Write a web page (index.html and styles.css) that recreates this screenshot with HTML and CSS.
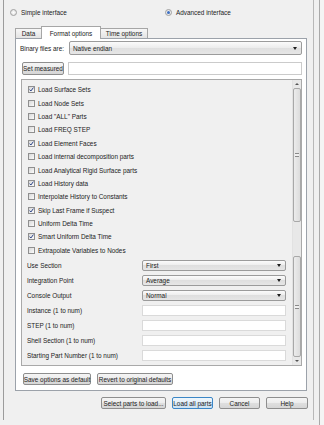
FILE: index.html
```html
<!DOCTYPE html>
<html lang="en">
<head>
  <meta charset="UTF-8" />
  <title>Import options</title>
  <link rel="stylesheet" href="styles.css">
</head>
<body>
  <div class="dialog">
    <div class="modes">
      <label class="mode"><span class="radio"></span>Simple interface</label>
      <label class="mode"><span class="radio on"></span>Advanced interface</label>
    </div>

    <div class="tabs">
      <div class="tab tab-data">Data</div>
      <div class="tab tab-format active">Format options</div>
      <div class="tab tab-time">Time options</div>
    </div>

    <div class="panel">
      <div class="row-binary">
        <span class="binary-label">Binary files are:</span>
        <div class="combo combo-wide"><span>Native endian</span><span class="arrow"></span></div>
      </div>
      <div class="row-measured">
        <button type="button" class="btn btn-measured">Set measured</button>
        <div class="textbox"></div>
      </div>

      <div class="scroll-area">
        <div class="list">
          <div class="check-row"><span class="checkbox on"><svg width="5" height="5" viewBox="0 0 5 5"><path d="M0.6 2.6 L1.9 4 L4.4 0.6" /></svg></span>Load Surface Sets</div>
          <div class="check-row"><span class="checkbox"></span>Load Node Sets</div>
          <div class="check-row"><span class="checkbox"></span>Load "ALL" Parts</div>
          <div class="check-row"><span class="checkbox"></span>Load FREQ STEP</div>
          <div class="check-row"><span class="checkbox on"><svg width="5" height="5" viewBox="0 0 5 5"><path d="M0.6 2.6 L1.9 4 L4.4 0.6" /></svg></span>Load Element Faces</div>
          <div class="check-row"><span class="checkbox"></span>Load internal decomposition parts</div>
          <div class="check-row"><span class="checkbox"></span>Load Analytical Rigid Surface parts</div>
          <div class="check-row"><span class="checkbox on"><svg width="5" height="5" viewBox="0 0 5 5"><path d="M0.6 2.6 L1.9 4 L4.4 0.6" /></svg></span>Load History data</div>
          <div class="check-row"><span class="checkbox"></span>Interpolate History to Constants</div>
          <div class="check-row"><span class="checkbox on"><svg width="5" height="5" viewBox="0 0 5 5"><path d="M0.6 2.6 L1.9 4 L4.4 0.6" /></svg></span>Skip Last Frame if Suspect</div>
          <div class="check-row"><span class="checkbox"></span>Uniform Delta Time</div>
          <div class="check-row"><span class="checkbox on"><svg width="5" height="5" viewBox="0 0 5 5"><path d="M0.6 2.6 L1.9 4 L4.4 0.6" /></svg></span>Smart Uniform Delta Time</div>
          <div class="check-row"><span class="checkbox"></span>Extrapolate Variables to Nodes</div>

          <div class="field-row"><span class="field-label">Use Section</span><div class="combo field"><span>First</span><span class="arrow"></span></div></div>
          <div class="field-row"><span class="field-label">Integration Point</span><div class="combo field"><span>Average</span><span class="arrow"></span></div></div>
          <div class="field-row"><span class="field-label">Console Output</span><div class="combo field"><span>Normal</span><span class="arrow"></span></div></div>
          <div class="field-row"><span class="field-label">Instance (1 to num)</span><div class="textbox field"></div></div>
          <div class="field-row"><span class="field-label">STEP (1 to num)</span><div class="textbox field"></div></div>
          <div class="field-row"><span class="field-label">Shell Section (1 to num)</span><div class="textbox field"></div></div>
          <div class="field-row"><span class="field-label">Starting Part Number (1 to num)</span><div class="textbox field"></div></div>
        </div>

        <div class="scrollbar">
          <div class="sb-arrow up"></div>
          <div class="sb-thumb thumb-top"><span class="grip"></span></div>
          <div class="sb-gap"></div>
          <div class="sb-thumb thumb-bottom"><span class="grip"></span></div>
          <div class="sb-fill"></div>
          <div class="sb-arrow down"></div>
        </div>
      </div>

      <div class="defaults-row">
        <button type="button" class="btn btn-save">Save options as default</button>
        <button type="button" class="btn btn-revert">Revert to original defaults</button>
      </div>
    </div>

    <div class="actions">
      <button type="button" class="btn btn-select">Select parts to load...</button>
      <button type="button" class="btn btn-load default">Load all parts</button>
      <button type="button" class="btn btn-cancel">Cancel</button>
      <button type="button" class="btn btn-help">Help</button>
    </div>
  </div>
</body>
</html>
```

FILE: styles.css
```css
* {
  margin: 0;
  padding: 0;
  box-sizing: border-box;
}
body {
  width: 324px;
  height: 425px;
  overflow: hidden;
  font-family: "Liberation Sans", Arial, sans-serif;
  font-size: 6.4px;
  color: #222;
  background: linear-gradient(to right, #f0f0f0 319px, #a9a9a9 319px, #a9a9a9 320px, #f4f4f4 320px);
}
.dialog {
  margin-left: 3px;
  width: 311px;
  height: 420px;
  background-color: #f0f0f0;
  border-left: 1px solid #9c9c9c;
  border-right: 1px solid #b8b8b8;
}

/* mode radios */
.modes {
  display: flex;
  align-items: center;
  height: 24px;
  padding-left: 6px;
}
.mode {
  display: flex;
  align-items: center;
  gap: 4px;
}
.mode:first-child {
  width: 155px;
}
.radio {
  width: 7px;
  height: 7px;
  border-radius: 50%;
  border: 1px solid #a0a0a0;
  background: radial-gradient(circle, #ffffff, #dadada);
}
.radio.on::after {
  content: "";
  display: block;
  width: 3px;
  height: 3px;
  margin: 1px;
  border-radius: 50%;
  background: #3d6fc2;
}

/* tabs */
.tabs {
  display: flex;
  align-items: flex-end;
  height: 12px;
  margin-top: 2px;
  margin-left: 11px;
  position: relative;
  z-index: 1;
}
.tab {
  height: 10px;
  display: flex;
  align-items: center;
  justify-content: center;
  white-space: nowrap;
  border: 1px solid #a6a6a6;
  border-bottom: none;
  background: linear-gradient(#f7f7f7, #e3e3e3);
}
.tab + .tab {
  margin-left: -1px;
}
.tab-data {
  width: 27px;
}
.tab-format {
  width: 60px;
}
.tab-time {
  width: 48px;
}
.tab.active {
  height: 13px;
  margin-bottom: -1px;
  background: #ffffff;
}

/* panel */
.panel {
  margin-left: 11px;
  width: 292px;
  height: 353px;
  border: 1px solid #9ca2aa;
  background-color: #ffffff;
  padding: 2px 4px 0 4px;
}
.row-binary {
  display: flex;
  align-items: center;
  height: 14px;
}
.binary-label {
  width: 49px;
  white-space: nowrap;
}
.combo {
  display: flex;
  align-items: center;
  justify-content: space-between;
  border: 1px solid #9b9b9b;
  border-radius: 2px;
  padding: 0 4px 0 3px;
  background: linear-gradient(#fbfbfb, #ececec 50%, #dfdfdf 50%, #e6e6e6);
}
.combo-wide {
  flex: 1;
  height: 14px;
}
.arrow {
  width: 0;
  height: 0;
  border-left: 2px solid transparent;
  border-right: 2px solid transparent;
  border-top: 3px solid #1e1e1e;
}
.row-measured {
  display: flex;
  gap: 4px;
  height: 13px;
  margin-top: 7px;
  padding-left: 2px;
}
.textbox {
  flex: 1;
  background-color: #ffffff;
  border: 1px solid #cbcbcb;
}
.btn {
  display: flex;
  align-items: center;
  justify-content: center;
  height: 12px;
  font: inherit;
  color: inherit;
  white-space: nowrap;
  border: 1px solid #8e8e8e;
  border-radius: 2px;
  background: linear-gradient(#f5f5f5, #ececec 50%, #dfdfdf 50%, #d6d6d6);
}
.btn-measured {
  width: 42px;
  height: 13px;
}

/* scrolled list */
.scroll-area {
  display: flex;
  height: 287px;
  margin-top: 4px;
  margin-left: 1px;
  border: 1px solid #a9a9a9;
  background-color: #f0f0f0;
}
.list {
  flex: 1;
  padding-top: 3px;
}
.check-row {
  display: flex;
  align-items: center;
  gap: 3px;
  height: 13.4px;
  padding-left: 6px;
  white-space: nowrap;
}
.checkbox {
  width: 7px;
  height: 7px;
  display: flex;
  align-items: center;
  justify-content: center;
  border: 1px solid #8f8f8f;
  background: linear-gradient(135deg, #d8d8d8, #fbfbfb);
}
.checkbox svg path {
  fill: none;
  stroke: #2c4488;
  stroke-width: 1;
}
.field-row {
  display: flex;
  align-items: center;
  height: 15px;
  padding-left: 5px;
  white-space: nowrap;
}
.field-row:nth-child(14) {
  margin-top: 1px;
}
.field-label {
  width: 115px;
}
.field {
  flex: none;
  width: 144px;
  height: 11px;
}
.textbox.field {
  border-color: #dadada;
}

/* scrollbar */
.scrollbar {
  display: flex;
  flex-direction: column;
  width: 9px;
  background-color: #e8e8e8;
  border-left: 1px solid #e2e2e2;
}
.sb-arrow {
  height: 8px;
  display: flex;
  align-items: center;
  justify-content: center;
}
.sb-arrow::after {
  content: "";
  width: 0;
  height: 0;
  border-left: 2px solid transparent;
  border-right: 2px solid transparent;
}
.sb-arrow.up::after {
  border-bottom: 2px solid #555555;
}
.sb-arrow.down::after {
  border-top: 2px solid #555555;
}
.sb-thumb {
  display: flex;
  align-items: center;
  justify-content: center;
  border: 1px solid #a8a8a8;
  border-radius: 2px;
  background: linear-gradient(to right, #ececec, #dcdcdc);
}
.thumb-top {
  height: 134px;
}
.sb-gap {
  height: 34px;
}
.thumb-bottom {
  height: 101px;
}
.sb-fill {
  flex: 1;
}
.grip {
  width: 4px;
  height: 4px;
  border-top: 1px solid #8a8a8a;
  border-bottom: 1px solid #8a8a8a;
  background: linear-gradient(#f0f0f0 40%, #8a8a8a 40%, #8a8a8a 60%, #f0f0f0 60%);
}

/* buttons */
.defaults-row {
  display: flex;
  gap: 6px;
  margin-top: 7px;
  margin-left: 3px;
}
.btn-save {
  width: 68px;
}
.btn-revert {
  width: 76px;
}
.actions {
  display: flex;
  justify-content: flex-end;
  gap: 6px;
  margin-top: 6px;
  padding-right: 5px;
}
.btn-select {
  width: 65px;
}
.btn-load {
  width: 41px;
}
.btn-cancel {
  width: 41px;
}
.btn-help {
  width: 42px;
}
.btn.default {
  border-color: #3b86c6;
  background: linear-gradient(#eef6fc, #e3eff9 50%, #d3e6f5 50%, #cde2f3);
}
```
